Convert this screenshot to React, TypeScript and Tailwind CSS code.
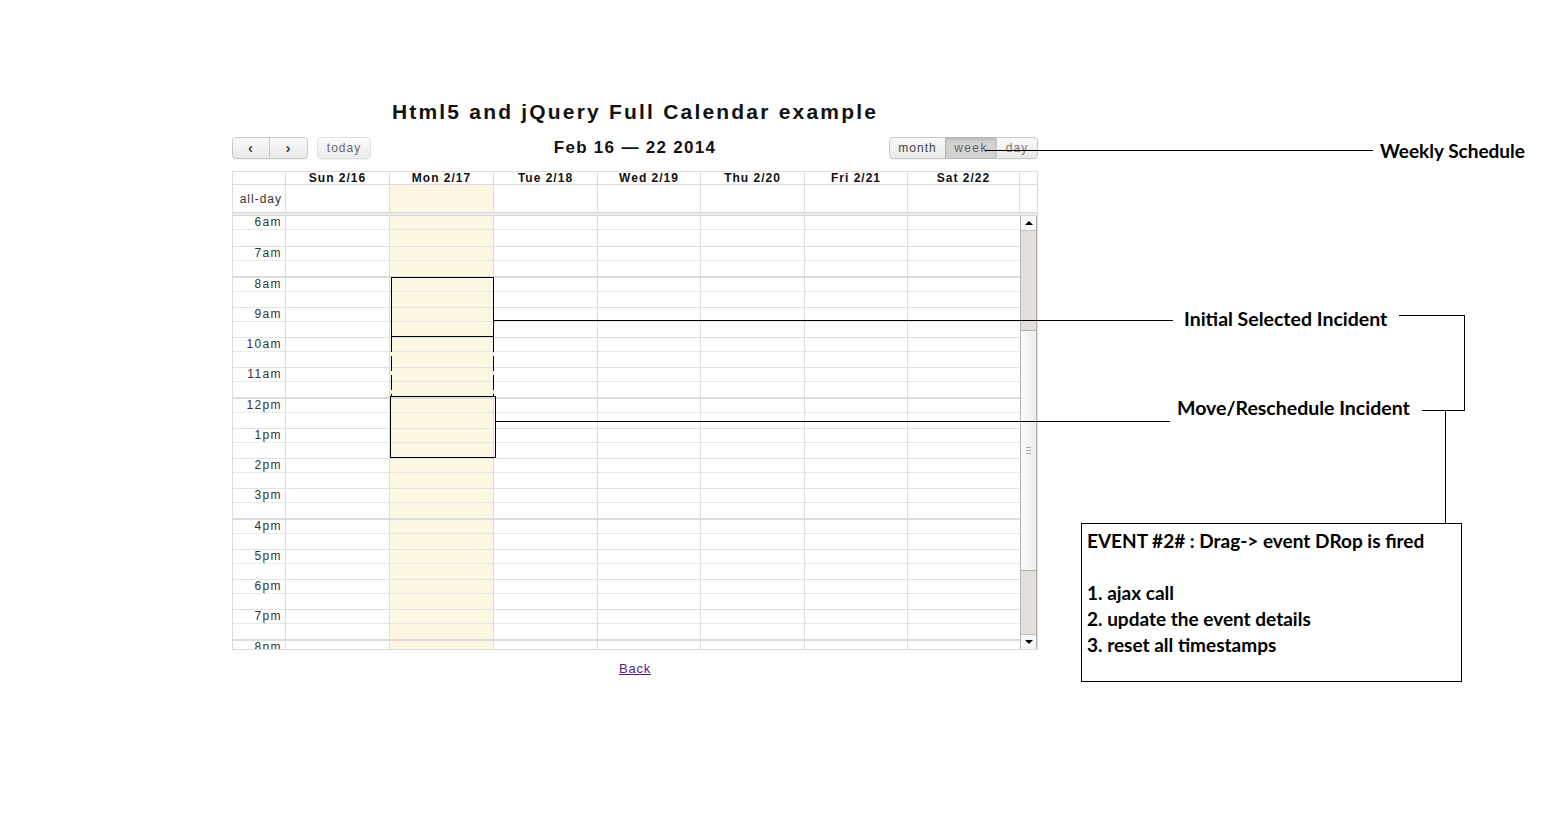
import React from 'react'

const days = ['Sun 2/16', 'Mon 2/17', 'Tue 2/18', 'Wed 2/19', 'Thu 2/20', 'Fri 2/21', 'Sat 2/22']

const hours = [
  { label: '6am', thick: false, first: true },
  { label: '7am', thick: false },
  { label: '8am', thick: true },
  { label: '9am', thick: false },
  { label: '10am', thick: false },
  { label: '11am', thick: false },
  { label: '12pm', thick: true },
  { label: '1pm', thick: false },
  { label: '2pm', thick: false },
  { label: '3pm', thick: false },
  { label: '4pm', thick: true },
  { label: '5pm', thick: false },
  { label: '6pm', thick: false },
  { label: '7pm', thick: false },
  { label: '8pm', thick: true },
]

const cols = 'grid grid-cols-[53px_104px_104px_104px_103px_104px_103px_112px]'

function Btn({
  children,
  className = '',
}: {
  children: React.ReactNode
  className?: string
}) {
  return (
    <button
      type="button"
      className={`h-[22px] border border-[#c9c9c9] bg-linear-to-b from-[#fafafa] to-[#e8e8e8] text-[12px] leading-[20px] tracking-[1px] text-[#444] shadow-[0_1px_1px_rgba(0,0,0,0.06)] ${className}`}
    >
      {children}
    </button>
  )
}

function HourRow({ label, thick, first }: { label: string; thick: boolean; first?: boolean }) {
  const border = first ? '' : thick ? 'border-t-2 border-[#dcdcdc]' : 'border-t border-[#e2e2e2]'
  return (
    <div className={`${cols} ${border}`}>
      {Array.from({ length: 8 }).map((_, i) => (
        <div
          key={i}
          className={`${i < 7 ? 'border-r border-[#dedede]' : ''} ${i === 2 ? 'bg-[#fcf8e4]' : ''} ${
            first ? 'h-[30px]' : 'h-[29px]'
          }`}
        >
          <div
            className={`h-[14px] border-b border-dotted border-[#d6d6d6] ${
              i === 0 ? 'pr-[3px] text-right text-[12px] leading-[12px] tracking-[1.4px] text-[#333]' : ''
            }`}
          >
            {i === 0 ? label : null}
          </div>
        </div>
      ))}
    </div>
  )
}

function Scrollbar() {
  return (
    <div className="flex h-[433px] w-[17px] flex-col border-x border-[#b3b3b3] bg-[#e3e0db]">
      <div className="flex h-[15px] items-center justify-center border-b border-[#c2c2c2] bg-[#f7f7f7]">
        <div className="h-0 w-0 border-x-[4px] border-b-[4px] border-x-transparent border-b-black" />
      </div>
      <div className="h-[99px]" />
      <div className="flex h-[241px] items-center justify-center border-y border-[#b0b0b0] bg-linear-to-r from-[#fbfbfa] to-[#eeedeb]">
        <div className="flex w-[5px] flex-col gap-[2px]">
          <div className="h-px bg-[#aaa]" />
          <div className="h-px bg-[#aaa]" />
          <div className="h-px bg-[#aaa]" />
        </div>
      </div>
      <div className="flex-1" />
      <div className="flex h-[15px] items-center justify-center border-t border-[#c2c2c2] bg-[#f7f7f7]">
        <div className="h-0 w-0 border-x-[4px] border-t-[4px] border-x-transparent border-t-black" />
      </div>
    </div>
  )
}

function Calendar() {
  return (
    <div className="w-[806px]">
      <h1 className="text-center text-[21px] font-bold leading-[24px] tracking-[2.2px] text-[#111]">
        Html5 and jQuery Full Calendar example
      </h1>

      <div className="mt-[13px] grid h-[22px] grid-cols-[1fr_auto_1fr] items-center">
        <div className="flex items-center">
          <Btn className="w-[38px] rounded-l-[4px] text-[15px] font-bold text-[#222]">‹</Btn>
          <Btn className="-ml-px w-[39px] rounded-r-[4px] text-[15px] font-bold text-[#222]">›</Btn>
          <Btn className="ml-[9px] w-[54px] rounded-[4px] border-[#dadada] text-[#9a9a9a] opacity-80">
            today
          </Btn>
        </div>
        <h2 className="text-[17px] font-bold leading-[20px] tracking-[1.3px] text-[#111]">Feb 16 — 22 2014</h2>
        <div className="flex items-center justify-self-end">
          <Btn className="w-[57px] rounded-l-[4px]">month</Btn>
          <button
            type="button"
            className="-ml-px h-[22px] w-[52px] border border-[#b9b9b9] bg-[#d3d3d3] text-[12px] leading-[20px] tracking-[1.4px] text-[#666] shadow-[inset_0_2px_3px_rgba(0,0,0,0.12)]"
          >
            week
          </button>
          <Btn className="-ml-px w-[42px] rounded-r-[4px] text-[#777]">day</Btn>
        </div>
      </div>

      <div className="mt-[12px] border border-[#dcdcdc]">
        <div className="grid grid-cols-[53px_104px_104px_104px_103px_104px_103px_112px_17px] border-b border-[#dcdcdc]">
          <div className="h-[12px] border-r border-[#dcdcdc]" />
          {days.map((d) => (
            <div
              key={d}
              className="h-[12px] border-r border-[#dcdcdc] text-center text-[12px] font-bold leading-[12px] tracking-[1px] text-[#111]"
            >
              {d}
            </div>
          ))}
          <div />
        </div>
        <div className="grid grid-cols-[53px_104px_104px_104px_103px_104px_103px_112px_17px]">
          <div className="flex h-[27px] items-center justify-end border-r border-[#dcdcdc] pr-[3px] text-[12px] tracking-[1px] text-[#333]">
            all-day
          </div>
          {days.map((d, i) => (
            <div
              key={d}
              className={`h-[27px] border-r border-[#dcdcdc] ${i === 1 ? 'bg-[#fcf8e4]' : ''}`}
            />
          ))}
          <div />
        </div>
        <div className="h-[4px] border-y border-[#d8d8d8] bg-[#ececec]" />
        <div className="flex">
          <div className="h-[433px] flex-1 overflow-hidden">
            {hours.map((h) => (
              <HourRow key={h.label} label={h.label} thick={h.thick} first={h.first} />
            ))}
          </div>
          <Scrollbar />
        </div>
      </div>

      <div className="mt-[6px] text-center">
        <a href="#" className="text-[13px] leading-[16px] tracking-[0.8px] text-[#551a8b] underline">
          Back
        </a>
      </div>
    </div>
  )
}

function Annotations() {
  return (
    <>
      <svg className="pointer-events-none absolute inset-0" width="1567" height="833">
        <g stroke="#000" strokeWidth="1" fill="none" shapeRendering="crispEdges">
          <rect x="391.5" y="277.5" width="102" height="59" />
          <rect x="390.5" y="396.5" width="105" height="61" />
          <line x1="391.5" y1="337" x2="391.5" y2="396" strokeDasharray="15 4" />
          <line x1="493.5" y1="337" x2="493.5" y2="396" strokeDasharray="15 4" />
          <line x1="985" y1="150.5" x2="1373" y2="150.5" />
          <line x1="494" y1="320.5" x2="1173" y2="320.5" />
          <line x1="496" y1="421.5" x2="1170" y2="421.5" />
          <line x1="1399" y1="315.5" x2="1464" y2="315.5" />
          <line x1="1464.5" y1="315" x2="1464.5" y2="411" />
          <line x1="1422" y1="410.5" x2="1464" y2="410.5" />
          <line x1="1445.5" y1="410" x2="1445.5" y2="523" />
        </g>
      </svg>

      <div className="absolute left-[1380px] top-[140px] text-[19px] font-bold leading-[22px] text-black">
        Weekly Schedule
      </div>
      <div className="absolute left-[1184px] top-[308px] text-[19.5px] font-bold leading-[22px] text-black">
        Initial Selected Incident
      </div>
      <div className="absolute left-[1177px] top-[397px] text-[19.5px] font-bold leading-[22px] text-black">
        Move/Reschedule Incident
      </div>

      <div className="absolute left-[1081px] top-[523px] h-[159px] w-[381px] border border-black px-[5px] pt-[4px] text-[19px] font-bold leading-[26px] text-black">
        <div>EVENT #2# : Drag-&gt; event DRop is fired</div>
        <div className="h-[26px]" />
        <div>1. ajax call</div>
        <div>2. update the event details</div>
        <div>3. reset all timestamps</div>
      </div>
    </>
  )
}

export default function App() {
  return (
    <div className="relative h-[833px] w-[1567px] overflow-hidden bg-white">
      <div className="pl-[232px] pt-[100px] font-[family-name:'Liberation_Sans',Arial,sans-serif]">
        <Calendar />
      </div>
      <div className="font-[family-name:'Lato',sans-serif]">
        <Annotations />
      </div>
    </div>
  )
}
